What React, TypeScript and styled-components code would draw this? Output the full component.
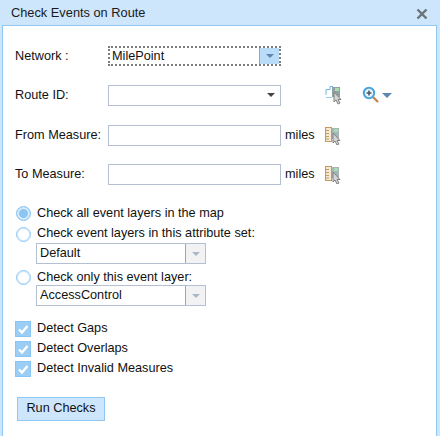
import React from "react";
import styled, { createGlobalStyle } from "styled-components";

const GlobalStyle = createGlobalStyle`
  html, body {
    margin: 0;
    padding: 0;
    background: #fff;
    font-family: "Liberation Sans", Arial, sans-serif;
  }
`;

const Panel = styled.div`
  width: 440px;
  height: 436px;
  box-sizing: border-box;
  background: #cde6fb;
  padding: 0 3px 0 2px;
  display: flex;
  flex-direction: column;
  overflow: hidden;
`;

const TitleBar = styled.div`
  height: 25px;
  flex: none;
  display: flex;
  align-items: center;
  justify-content: space-between;
  padding: 0 9px 0 9px;
  font-size: 12.8px;
  color: #1a1a1a;
`;

const Body = styled.div`
  flex: 1;
  background: #fff;
  border: 1px solid #8fc8f5;
  border-bottom: none;
  padding: 20px 0 0 12px;
  font-size: 12.7px;
  color: #111;
`;

const FormRow = styled.div<{ $mb: number }>`
  display: flex;
  align-items: center;
  height: 20px;
  margin-bottom: ${(p) => p.$mb}px;
`;

const Label = styled.div`
  width: 93px;
  flex: none;
  box-sizing: border-box;
  padding-bottom: 1px;
`;

const TextBox = styled.div`
  width: 173px;
  height: 21px;
  box-sizing: border-box;
  border: 1px solid #b4bfd2;
  background: #fff;
`;

const Miles = styled.span`
  margin-left: 4px;
  width: 34px;
  padding-bottom: 1px;
`;

const NetworkSelect = styled.div`
  width: 173px;
  height: 20px;
  box-sizing: border-box;
  border: 2px dotted #7d7d7d;
  display: flex;
  align-items: center;
  padding-left: 2px;
  justify-content: space-between;
`;

const SelectText = styled.span<{ $pb: number }>`
  padding-bottom: ${(p) => p.$pb}px;
`;

const ArrowCell = styled.div<{ $bg: string }>`
  width: 19px;
  align-self: stretch;
  flex: none;
  background: ${(p) => p.$bg};
  border-left: 1px solid #8ea9c8;
  display: flex;
  align-items: center;
  justify-content: center;
`;

const Arrow = styled.div<{ $color: string; $size?: number }>`
  width: 0;
  height: 0;
  border-left: ${(p) => p.$size ?? 4}px solid transparent;
  border-right: ${(p) => p.$size ?? 4}px solid transparent;
  border-top: ${(p) => p.$size ?? 4}px solid ${(p) => p.$color};
`;

const RouteBox = styled(TextBox)`
  display: flex;
  align-items: center;
  justify-content: flex-end;
  padding-right: 5px;
`;

const IconSlot = styled.div<{ $ml: number }>`
  margin-left: ${(p) => p.$ml}px;
  display: flex;
  align-items: center;
`;

const ZoomTool = styled.div`
  margin-left: 19px;
  display: flex;
  align-items: center;
  gap: 2px;
`;

const OptionRow = styled.div<{ $h: number; $pt?: number }>`
  display: flex;
  align-items: center;
  gap: 6px;
  box-sizing: border-box;
  height: ${(p) => p.$h}px;
  padding-top: ${(p) => p.$pt ?? 0}px;
`;

const RadioMark = styled.div<{ $on?: boolean; $drop?: number }>`
  width: 15px;
  height: 15px;
  box-sizing: border-box;
  border-radius: 50%;
  border: 1px solid #8fc8f5;
  margin: ${(p) => p.$drop ?? 0}px 0 0 1px;
  background: ${(p) => (p.$on ? "#8cc5f2" : "#fff")};
  box-shadow: ${(p) => (p.$on ? "inset 0 0 0 2px #d6ebfc" : "inset 0 0 0 1px #cfe6fa")};
  flex: none;
`;

const LayerSelect = styled.div`
  width: 170px;
  height: 21px;
  box-sizing: border-box;
  margin-left: 21px;
  border: 1px solid #b4bfd2;
  display: flex;
  align-items: center;
  justify-content: space-between;
  padding-left: 3px;
`;

const CheckList = styled.div`
  margin-top: 13px;
`;

const CheckMark = styled.div`
  width: 16px;
  height: 16px;
  box-sizing: border-box;
  background: #9ccdf4;
  border: 1px solid #8cc4f1;
  flex: none;
  display: flex;
  align-items: center;
  justify-content: center;
`;

const CheckRow = styled.div`
  display: flex;
  align-items: center;
  gap: 6px;
  height: 20px;
`;

const CheckText = styled.span`
  padding-bottom: 3px;
`;

const RunButton = styled.button`
  margin: 18px 0 0 2px;
  width: 88px;
  height: 24px;
  padding: 0 0 2px;
  background: #cde6fb;
  border: 1px solid #8fc8f5;
  font: inherit;
  color: #111;
`;

const CloseIcon = () => (
  <svg width="12" height="12" viewBox="0 0 12 12" style={{ marginTop: 3 }}>
    <path d="M1.5 1.5 L10.5 10.5 M10.5 1.5 L1.5 10.5" stroke="#6b7279" strokeWidth="2.4" />
  </svg>
);

const Cursor = () => (
  <path d="M9 7 L9 17 L11 15 L13 19 L15 18 L13 14.5 L16 14.5 Z" fill="#d4d4d4" stroke="#808080" strokeWidth="1" />
);

const RoutePickIcon = () => (
  <svg width="18" height="20" viewBox="0 0 18 20">
    <path d="M1 10 V4.5 H5 V1.5 H8" fill="none" stroke="#6fb6ea" strokeWidth="1" />
    <path d="M1 12.5 H7" stroke="#9ccdf0" strokeWidth="1" />
    <rect x="7" y="2" width="8" height="10" fill="#8fa3a5" />
    <rect x="10" y="3" width="4" height="3" fill="#a9dcaa" />
    <Cursor />
  </svg>
);

const MeasurePickIcon = () => (
  <svg width="18" height="19" viewBox="0 0 18 19">
    <rect x="1.5" y="1.5" width="6" height="14" fill="#f6e9d4" stroke="#c39a62" strokeWidth="1" />
    <path d="M2 4.5 H5 M2 7.5 H5 M2 10.5 H5 M2 13 H5" stroke="#c39a62" strokeWidth="1" />
    <rect x="8" y="2" width="7" height="11" fill="#a3b5b7" />
    <rect x="10" y="3" width="4" height="3" fill="#a9dcaa" />
    <Cursor />
  </svg>
);

const ZoomIcon = () => (
  <svg width="18" height="18" viewBox="0 0 18 18">
    <path d="M11 11 L16 16" stroke="#c08a4e" strokeWidth="2.4" />
    <circle cx="7" cy="7" r="5.2" fill="#e8f3fa" stroke="#4aa3da" strokeWidth="2" />
    <path d="M4.5 7 H9.5 M7 4.5 V9.5" stroke="#4c5a66" strokeWidth="1.6" />
  </svg>
);

const Tick = () => (
  <svg width="12" height="12" viewBox="0 0 12 12">
    <path d="M2 6.5 L5 9.5 L10.5 3" fill="none" stroke="#fff" strokeWidth="2.4" />
  </svg>
);

const checks = ["Detect Gaps", "Detect Overlaps", "Detect Invalid Measures"];

export default function App() {
  return (
    <>
      <GlobalStyle />
      <Panel>
        <TitleBar>
          <span>Check Events on Route</span>
          <CloseIcon />
        </TitleBar>
        <Body>
          <FormRow $mb={19}>
            <Label>Network :</Label>
            <NetworkSelect>
              <SelectText $pb={1}>MilePoint</SelectText>
              <ArrowCell $bg="#b9dcf9">
                <Arrow $color="#5f88b0" />
              </ArrowCell>
            </NetworkSelect>
          </FormRow>
          <FormRow $mb={20}>
            <Label>Route ID:</Label>
            <RouteBox>
              <Arrow $color="#444" />
            </RouteBox>
            <IconSlot $ml={44}>
              <RoutePickIcon />
            </IconSlot>
            <ZoomTool>
              <ZoomIcon />
              <Arrow $color="#5f88b0" $size={5} />
            </ZoomTool>
          </FormRow>
          <FormRow $mb={19}>
            <Label>From Measure:</Label>
            <TextBox />
            <Miles>miles</Miles>
            <IconSlot $ml={5}>
              <MeasurePickIcon />
            </IconSlot>
          </FormRow>
          <FormRow $mb={19}>
            <Label>To Measure:</Label>
            <TextBox />
            <Miles>miles</Miles>
            <IconSlot $ml={5}>
              <MeasurePickIcon />
            </IconSlot>
          </FormRow>
          <OptionRow $h={20}>
            <RadioMark $on />
            Check all event layers in the map
          </OptionRow>
          <OptionRow $h={20}>
            <RadioMark $drop={3} />
            Check event layers in this attribute set:
          </OptionRow>
          <LayerSelect>
            <SelectText $pb={2}>Default</SelectText>
            <ArrowCell $bg="#f2f2f4">
              <Arrow $color="#a9b8c9" />
            </ArrowCell>
          </LayerSelect>
          <OptionRow $h={21} $pt={5}>
            <RadioMark />
            Check only this event layer:
          </OptionRow>
          <LayerSelect>
            <SelectText $pb={2}>AccessControl</SelectText>
            <ArrowCell $bg="#f2f2f4">
              <Arrow $color="#a9b8c9" />
            </ArrowCell>
          </LayerSelect>
          <CheckList>
            {checks.map((c) => (
              <CheckRow key={c}>
                <CheckMark>
                  <Tick />
                </CheckMark>
                <CheckText>{c}</CheckText>
              </CheckRow>
            ))}
          </CheckList>
          <RunButton>Run Checks</RunButton>
        </Body>
      </Panel>
    </>
  );
}
